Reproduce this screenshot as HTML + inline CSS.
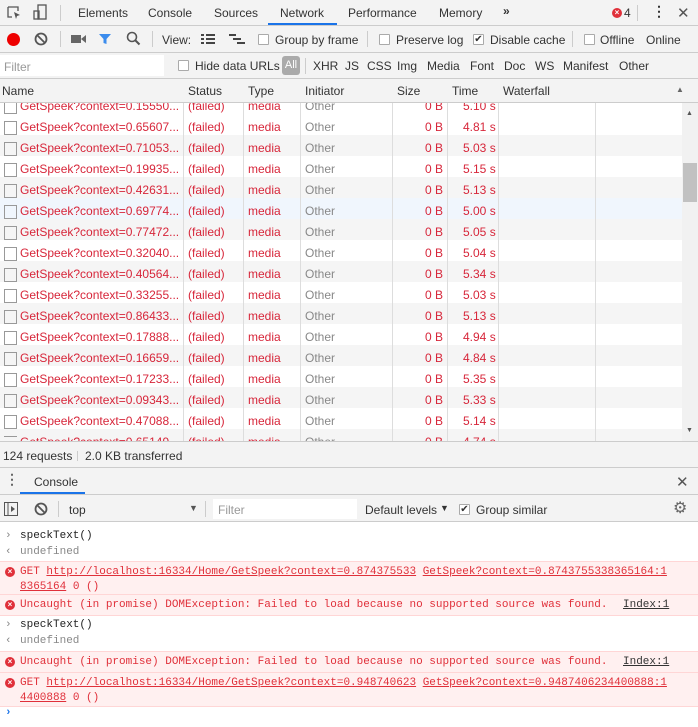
<!DOCTYPE html>
<html><head><meta charset="utf-8"><style>
*{box-sizing:border-box;margin:0;padding:0}
body{width:698px;height:727px;overflow:hidden;background:#fff;font-family:"Liberation Sans",sans-serif;font-size:12px;color:#333;position:relative}
.abs{position:absolute}
.bar{position:absolute;left:0;width:698px;background:#f3f3f3;border-bottom:1px solid #ccc}
.t{position:absolute;white-space:nowrap}
.cb{position:absolute;width:11px;height:11px;border:1px solid #aaa;background:#fff;border-radius:1px}
.sep{position:absolute;width:1px;background:#ccc}
.row{position:absolute;left:0;width:682px;height:21px;color:#d7263a}
.row span{position:absolute;top:6px;white-space:nowrap}
.mono{font-family:"Liberation Mono",monospace;font-size:11px}
.err{background:#fff0f0;border-top:1px solid #ffd6d6;color:#e0303a}
.ic{position:absolute;width:10px;height:10px;border-radius:50%;background:#e0303a;color:#fff;font-size:8px;line-height:10px;text-align:center;font-family:"Liberation Sans",sans-serif;font-weight:bold}
u{text-decoration:underline}
</style></head><body>
<div class="bar" style="top:0;height:26px">
 <svg class="abs" style="left:6px;top:5px" width="16" height="16"><path d="M2 2h10v4M2 2v10h4" fill="none" stroke="#555" stroke-width="1.3"/><path d="M8 7l6 3-3 1-1 3z" fill="#555"/></svg>
 <svg class="abs" style="left:32px;top:4px" width="16" height="17"><rect x="6" y="1" width="8" height="14" fill="none" stroke="#555" stroke-width="1.3"/><rect x="2" y="7" width="5" height="8" fill="none" stroke="#555" stroke-width="1.3"/></svg>
 <div class="sep" style="left:60px;top:5px;height:16px"></div>
 <span class="t" style="left:78px;top:6px">Elements</span>
 <span class="t" style="left:148px;top:6px">Console</span>
 <span class="t" style="left:214px;top:6px">Sources</span>
 <span class="t" style="left:280px;top:6px;color:#333">Network</span>
 <div class="abs" style="left:268px;top:23px;width:69px;height:2px;background:#1a73e8"></div>
 <span class="t" style="left:348px;top:6px">Performance</span>
 <span class="t" style="left:439px;top:6px">Memory</span>
 <span class="t" style="left:503px;top:4px;font-weight:bold">»</span>
 <div class="ic" style="left:612px;top:8px">×</div>
 <span class="t" style="left:624px;top:6px">4</span>
 <div class="sep" style="left:637px;top:5px;height:16px"></div>
 <span class="t" style="left:652px;top:3px;font-weight:bold;font-size:14px">⋮</span>
 <span class="t" style="left:677px;top:4px;font-size:15px;color:#555">✕</span>
</div>
<div class="bar" style="top:26px;height:27px">
 <div class="abs" style="left:7px;top:7px;width:13px;height:13px;border-radius:50%;background:#e00;"></div>
 <svg class="abs" style="left:34px;top:6px" width="14" height="14"><circle cx="7" cy="7" r="5.5" fill="none" stroke="#555" stroke-width="1.8"/><path d="M3 3l8 8" stroke="#555" stroke-width="1.8"/></svg>
 <div class="sep" style="left:60px;top:5px;height:16px"></div>
 <svg class="abs" style="left:71px;top:8px" width="16" height="10"><rect x="0" y="1" width="10" height="8" fill="#666"/><path d="M10 5l5-4v8z" fill="#666"/></svg>
 <svg class="abs" style="left:98px;top:6px" width="14" height="14"><path d="M1 2h12l-4.5 5v5l-3-1v-4z" fill="#3b8ced"/></svg>
 <svg class="abs" style="left:126px;top:5px" width="15" height="15"><circle cx="6" cy="6" r="4.5" fill="none" stroke="#555" stroke-width="1.6"/><path d="M9.5 9.5l4 4" stroke="#555" stroke-width="2"/></svg>
 <div class="sep" style="left:152px;top:5px;height:16px"></div>
 <span class="t" style="left:162px;top:7px">View:</span>
 <svg class="abs" style="left:201px;top:8px" width="14" height="11"><path d="M0 1h3M5 1h9M0 5h3M5 5h9M0 9h3M5 9h9" stroke="#444" stroke-width="2"/></svg>
 <svg class="abs" style="left:229px;top:8px" width="16" height="11"><path d="M0 1h7M4 5h8M8 9h8" stroke="#444" stroke-width="2"/></svg>
 <div class="cb" style="left:258px;top:8px"></div><span class="t" style="left:275px;top:7px">Group by frame</span>
 <div class="sep" style="left:367px;top:5px;height:16px"></div>
 <div class="cb" style="left:379px;top:8px"></div><span class="t" style="left:396px;top:7px">Preserve log</span>
 <div class="cb" style="left:473px;top:8px;font-size:10px;line-height:9px;text-align:center">✔</div><span class="t" style="left:490px;top:7px">Disable cache</span>
 <div class="sep" style="left:572px;top:5px;height:16px"></div>
 <div class="cb" style="left:584px;top:8px"></div><span class="t" style="left:600px;top:7px">Offline</span>
 <span class="t" style="left:646px;top:7px">Online</span>
</div>
<div class="bar" style="top:53px;height:26px">
 <div class="abs" style="left:0;top:2px;width:164px;height:21px;background:#fff"></div>
 <span class="t" style="left:4px;top:7px;color:#999">Filter</span>
 <div class="cb" style="left:178px;top:7px"></div><span class="t" style="left:195px;top:6px">Hide data URLs</span>
 <div class="abs" style="left:282px;top:3px;width:18px;height:19px;border-radius:3px;background:#aaa;color:#fff;text-align:center;line-height:19px;font-size:11px">All</div>
 <div class="sep" style="left:305px;top:5px;height:16px"></div>
 <span class="t" style="left:313px;top:6px">XHR</span><span class="t" style="left:345px;top:6px">JS</span><span class="t" style="left:367px;top:6px">CSS</span><span class="t" style="left:397px;top:6px">Img</span><span class="t" style="left:427px;top:6px">Media</span><span class="t" style="left:470px;top:6px">Font</span><span class="t" style="left:504px;top:6px">Doc</span><span class="t" style="left:535px;top:6px">WS</span><span class="t" style="left:563px;top:6px">Manifest</span><span class="t" style="left:619px;top:6px">Other</span>
</div>
<div class="bar" style="top:79px;height:24px;border-bottom:1px solid #ccc">
 <span class="t" style="left:2px;top:5px">Name</span><span class="t" style="left:188px;top:5px">Status</span><span class="t" style="left:248px;top:5px">Type</span><span class="t" style="left:305px;top:5px">Initiator</span><span class="t" style="left:397px;top:5px">Size</span><span class="t" style="left:452px;top:5px">Time</span><span class="t" style="left:503px;top:5px">Waterfall</span>
 <span class="t" style="left:676px;top:6px;font-size:8px;color:#666">▲</span>
</div>
<div class="abs" style="left:0;top:103px;width:698px;height:338px;overflow:hidden">
<div class="row" style="top:-10px;background:#fff"><span style="left:20px">GetSpeek?context=0.15550...</span><span style="left:188px">(failed)</span><span style="left:248px">media</span><span style="left:305px;color:#888">Other</span><span style="left:425px">0 B</span><span style="left:463px">5.10 s</span></div>
<div class="row" style="top:11px;background:#fff"><span style="left:20px">GetSpeek?context=0.65607...</span><span style="left:188px">(failed)</span><span style="left:248px">media</span><span style="left:305px;color:#888">Other</span><span style="left:425px">0 B</span><span style="left:463px">4.81 s</span></div>
<div class="row" style="top:32px;background:#f5f5f5"><span style="left:20px">GetSpeek?context=0.71053...</span><span style="left:188px">(failed)</span><span style="left:248px">media</span><span style="left:305px;color:#888">Other</span><span style="left:425px">0 B</span><span style="left:463px">5.03 s</span></div>
<div class="row" style="top:53px;background:#fff"><span style="left:20px">GetSpeek?context=0.19935...</span><span style="left:188px">(failed)</span><span style="left:248px">media</span><span style="left:305px;color:#888">Other</span><span style="left:425px">0 B</span><span style="left:463px">5.15 s</span></div>
<div class="row" style="top:74px;background:#f5f5f5"><span style="left:20px">GetSpeek?context=0.42631...</span><span style="left:188px">(failed)</span><span style="left:248px">media</span><span style="left:305px;color:#888">Other</span><span style="left:425px">0 B</span><span style="left:463px">5.13 s</span></div>
<div class="row" style="top:95px;background:#f0f6fd"><span style="left:20px">GetSpeek?context=0.69774...</span><span style="left:188px">(failed)</span><span style="left:248px">media</span><span style="left:305px;color:#888">Other</span><span style="left:425px">0 B</span><span style="left:463px">5.00 s</span></div>
<div class="row" style="top:116px;background:#f5f5f5"><span style="left:20px">GetSpeek?context=0.77472...</span><span style="left:188px">(failed)</span><span style="left:248px">media</span><span style="left:305px;color:#888">Other</span><span style="left:425px">0 B</span><span style="left:463px">5.05 s</span></div>
<div class="row" style="top:137px;background:#fff"><span style="left:20px">GetSpeek?context=0.32040...</span><span style="left:188px">(failed)</span><span style="left:248px">media</span><span style="left:305px;color:#888">Other</span><span style="left:425px">0 B</span><span style="left:463px">5.04 s</span></div>
<div class="row" style="top:158px;background:#f5f5f5"><span style="left:20px">GetSpeek?context=0.40564...</span><span style="left:188px">(failed)</span><span style="left:248px">media</span><span style="left:305px;color:#888">Other</span><span style="left:425px">0 B</span><span style="left:463px">5.34 s</span></div>
<div class="row" style="top:179px;background:#fff"><span style="left:20px">GetSpeek?context=0.33255...</span><span style="left:188px">(failed)</span><span style="left:248px">media</span><span style="left:305px;color:#888">Other</span><span style="left:425px">0 B</span><span style="left:463px">5.03 s</span></div>
<div class="row" style="top:200px;background:#f5f5f5"><span style="left:20px">GetSpeek?context=0.86433...</span><span style="left:188px">(failed)</span><span style="left:248px">media</span><span style="left:305px;color:#888">Other</span><span style="left:425px">0 B</span><span style="left:463px">5.13 s</span></div>
<div class="row" style="top:221px;background:#fff"><span style="left:20px">GetSpeek?context=0.17888...</span><span style="left:188px">(failed)</span><span style="left:248px">media</span><span style="left:305px;color:#888">Other</span><span style="left:425px">0 B</span><span style="left:463px">4.94 s</span></div>
<div class="row" style="top:242px;background:#f5f5f5"><span style="left:20px">GetSpeek?context=0.16659...</span><span style="left:188px">(failed)</span><span style="left:248px">media</span><span style="left:305px;color:#888">Other</span><span style="left:425px">0 B</span><span style="left:463px">4.84 s</span></div>
<div class="row" style="top:263px;background:#fff"><span style="left:20px">GetSpeek?context=0.17233...</span><span style="left:188px">(failed)</span><span style="left:248px">media</span><span style="left:305px;color:#888">Other</span><span style="left:425px">0 B</span><span style="left:463px">5.35 s</span></div>
<div class="row" style="top:284px;background:#f5f5f5"><span style="left:20px">GetSpeek?context=0.09343...</span><span style="left:188px">(failed)</span><span style="left:248px">media</span><span style="left:305px;color:#888">Other</span><span style="left:425px">0 B</span><span style="left:463px">5.33 s</span></div>
<div class="row" style="top:305px;background:#fff"><span style="left:20px">GetSpeek?context=0.47088...</span><span style="left:188px">(failed)</span><span style="left:248px">media</span><span style="left:305px;color:#888">Other</span><span style="left:425px">0 B</span><span style="left:463px">5.14 s</span></div>
<div class="row" style="top:326px;background:#f5f5f5"><span style="left:20px">GetSpeek?context=0.65149...</span><span style="left:188px">(failed)</span><span style="left:248px">media</span><span style="left:305px;color:#888">Other</span><span style="left:425px">0 B</span><span style="left:463px">4.74 s</span></div>
</div>
<div class="abs" style="left:0;top:103px;width:698px;height:338px;overflow:hidden">
 <div class="abs" style="left:4px;top:-6px;width:12px;height:340px;background:repeating-linear-gradient(to bottom,transparent 0 3px,#999 3px 4px,transparent 4px 16px,#999 16px 17px,transparent 17px 21px)"></div>
 <div class="abs" style="left:4px;top:-6px;width:1px;height:340px;background:repeating-linear-gradient(to bottom,transparent 0 3px,#999 3px 17px,transparent 17px 21px)"></div>
 <div class="abs" style="left:16px;top:-6px;width:1px;height:340px;background:repeating-linear-gradient(to bottom,transparent 0 3px,#999 3px 17px,transparent 17px 21px)"></div>
 <div class="sep" style="left:183px;top:0;height:338px;background:#ddd"></div>
 <div class="sep" style="left:243px;top:0;height:338px;background:#ddd"></div>
 <div class="sep" style="left:300px;top:0;height:338px;background:#ddd"></div>
 <div class="sep" style="left:392px;top:0;height:338px;background:#ddd"></div>
 <div class="sep" style="left:447px;top:0;height:338px;background:#ddd"></div>
 <div class="sep" style="left:498px;top:0;height:338px;background:#ddd"></div>
 <div class="sep" style="left:595px;top:0;height:338px;background:#ddd"></div>
 <div class="abs" style="left:682px;top:0;width:16px;height:338px;background:#f1f1f1"></div>
 <span class="t" style="left:686px;top:7px;font-size:7px;color:#555">▲</span>
 <div class="abs" style="left:683px;top:60px;width:14px;height:39px;background:#c1c1c1"></div>
 <span class="t" style="left:686px;top:324px;font-size:7px;color:#555">▼</span>
</div>
<div class="bar" style="top:441px;height:27px;border-top:1px solid #ccc">
 <span class="t" style="left:3px;top:7px">124 requests</span><div class="sep" style="left:77px;top:9px;height:10px"></div><span class="t" style="left:85px;top:7px">2.0 KB transferred</span>
</div>
<div class="bar" style="top:468px;height:27px">
 <span class="t" style="left:5px;top:3px;font-weight:bold;font-size:14px;color:#666">⋮</span>
 <span class="t" style="left:34px;top:7px">Console</span>
 <div class="abs" style="left:20px;top:24px;width:65px;height:2px;background:#1a73e8"></div>
 <span class="t" style="left:676px;top:5px;font-size:15px;color:#555">✕</span>
</div>
<div class="bar" style="top:495px;height:27px">
 <svg class="abs" style="left:4px;top:7px" width="14" height="14"><rect x=".5" y=".5" width="13" height="13" fill="none" stroke="#555"/><path d="M4 1v12" stroke="#555"/><path d="M7 4l4 3-4 3z" fill="#555"/></svg>
 <svg class="abs" style="left:34px;top:7px" width="14" height="14"><circle cx="7" cy="7" r="5.5" fill="none" stroke="#555" stroke-width="1.8"/><path d="M3 3l8 8" stroke="#555" stroke-width="1.8"/></svg>
 <div class="sep" style="left:58px;top:6px;height:16px"></div>
 <span class="t" style="left:69px;top:8px">top</span>
 <span class="t" style="left:189px;top:8px;font-size:9px;color:#555">▼</span>
 <div class="sep" style="left:205px;top:6px;height:16px"></div>
 <div class="abs" style="left:213px;top:4px;width:144px;height:20px;background:#fff"></div>
 <span class="t" style="left:218px;top:8px;color:#999">Filter</span>
 <span class="t" style="left:365px;top:8px">Default levels</span><span class="t" style="left:440px;top:8px;font-size:9px">▼</span>
 <div class="cb" style="left:459px;top:9px;font-size:10px;line-height:9px;text-align:center">✔</div><span class="t" style="left:476px;top:8px">Group similar</span>
 <span class="t" style="left:673px;top:3px;font-size:16px;color:#666">⚙</span>
</div>
<div class="abs mono" style="left:0;top:522px;width:698px">
 <div style="position:relative;height:22px;color:#222"><span class="t" style="left:5px;top:8px;color:#888">›</span><span class="t" style="left:20px;top:8px">speckText()</span></div>
 <div style="position:relative;height:17px;color:#888"><span class="t" style="left:5px;top:2px">‹</span><span class="t" style="left:20px;top:2px">undefined</span></div>
 <div class="err" style="position:relative;height:33px"><div class="ic" style="left:5px;top:5px">×</div><span class="t" style="left:20px;top:4px">GET <u>http://localhost:16334/Home/GetSpeek?context=0.874375533</u>  <u>GetSpeek?context=0.8743755338365164:1</u></span><span class="t" style="left:20px;top:19px"><u>8365164</u> 0 ()</span></div>
 <div class="err" style="position:relative;height:21px"><div class="ic" style="left:5px;top:5px">×</div><span class="t" style="left:20px;top:4px">Uncaught (in promise) DOMException: Failed to load because no supported source was found.</span><span class="t" style="left:623px;top:4px;color:#333"><u>Index:1</u></span></div>
 <div style="position:relative;height:19px;color:#222;border-top:1px solid #ffd6d6"><span class="t" style="left:5px;top:3px;color:#888">›</span><span class="t" style="left:20px;top:3px">speckText()</span></div>
 <div style="position:relative;height:17px;color:#888"><span class="t" style="left:5px;top:1px">‹</span><span class="t" style="left:20px;top:1px">undefined</span></div>
 <div class="err" style="position:relative;height:21px"><div class="ic" style="left:5px;top:5px">×</div><span class="t" style="left:20px;top:4px">Uncaught (in promise) DOMException: Failed to load because no supported source was found.</span><span class="t" style="left:623px;top:4px;color:#333"><u>Index:1</u></span></div>
 <div class="err" style="position:relative;height:35px;border-bottom:1px solid #ffd6d6"><div class="ic" style="left:5px;top:5px">×</div><span class="t" style="left:20px;top:4px">GET <u>http://localhost:16334/Home/GetSpeek?context=0.948740623</u>  <u>GetSpeek?context=0.9487406234400888:1</u></span><span class="t" style="left:20px;top:19px"><u>4400888</u> 0 ()</span></div>
 <div style="position:relative;height:16px"><span class="t" style="left:5px;top:0px;color:#1a73e8;font-weight:bold">›</span></div>
</div>
</body></html>
